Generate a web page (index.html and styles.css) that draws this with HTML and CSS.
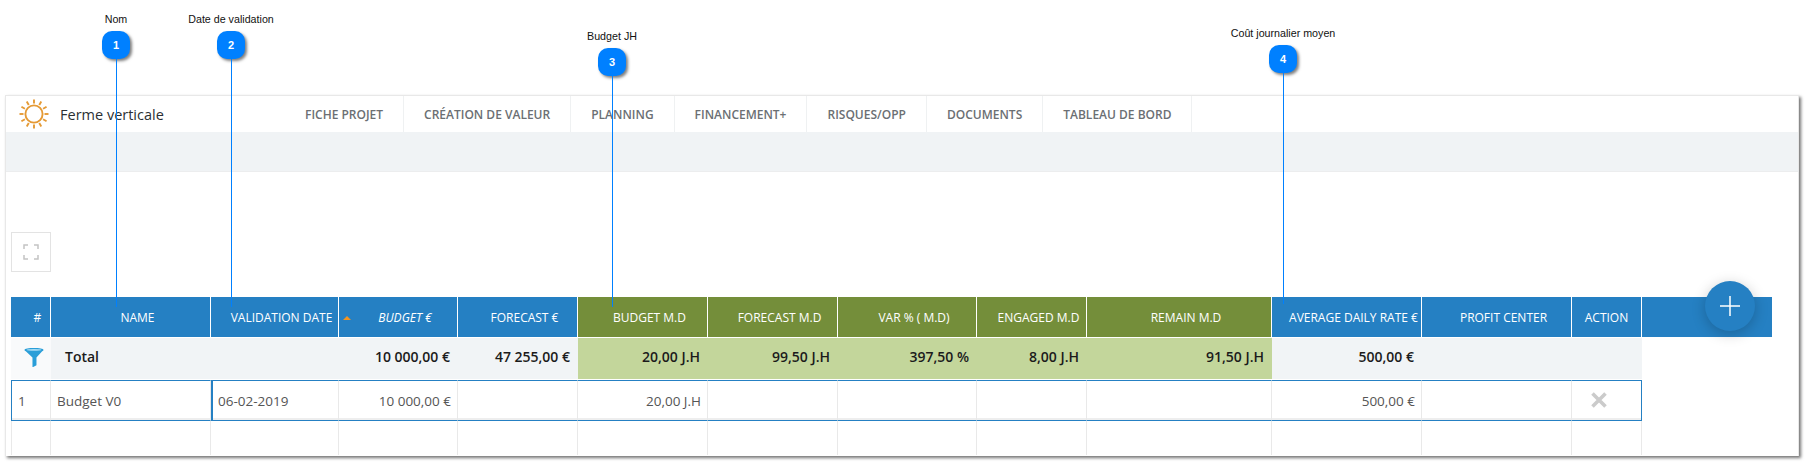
FILE: index.html
```html
<!DOCTYPE html>
<html lang="fr">
<head>
    <meta charset="UTF-8">
    <title>Ferme verticale - Budget</title>
    <link rel="stylesheet" href="styles.css">
</head>
<body>
<div class="callout callout-1">
    <span class="callout-label">Nom</span>
    <span class="callout-badge">1</span>
    <span class="callout-line"></span>
</div>
<div class="callout callout-2">
    <span class="callout-label">Date de validation</span>
    <span class="callout-badge">2</span>
    <span class="callout-line"></span>
</div>
<div class="callout callout-3">
    <span class="callout-label">Budget JH</span>
    <span class="callout-badge">3</span>
    <span class="callout-line"></span>
</div>
<div class="callout callout-4">
    <span class="callout-label">Coût journalier moyen</span>
    <span class="callout-badge">4</span>
    <span class="callout-line"></span>
</div>

<div class="frame">
    <header class="topbar">
        <div class="brand">
            <svg class="sun" viewBox="0 0 30 30" fill="none" stroke="#e59a35" stroke-width="1.9">
                <circle cx="15" cy="15" r="8.6"/>
                <line x1="15" y1="0.5" x2="15" y2="4.5"/>
                <line x1="15" y1="0.5" x2="15" y2="4.5" transform="rotate(30 15 15)"/>
                <line x1="15" y1="0.5" x2="15" y2="4.5" transform="rotate(60 15 15)"/>
                <line x1="15" y1="0.5" x2="15" y2="4.5" transform="rotate(90 15 15)"/>
                <line x1="15" y1="0.5" x2="15" y2="4.5" transform="rotate(120 15 15)"/>
                <line x1="15" y1="0.5" x2="15" y2="4.5" transform="rotate(150 15 15)"/>
                <line x1="15" y1="0.5" x2="15" y2="4.5" transform="rotate(180 15 15)"/>
                <line x1="15" y1="0.5" x2="15" y2="4.5" transform="rotate(210 15 15)"/>
                <line x1="15" y1="0.5" x2="15" y2="4.5" transform="rotate(240 15 15)"/>
                <line x1="15" y1="0.5" x2="15" y2="4.5" transform="rotate(270 15 15)"/>
                <line x1="15" y1="0.5" x2="15" y2="4.5" transform="rotate(300 15 15)"/>
                <line x1="15" y1="0.5" x2="15" y2="4.5" transform="rotate(330 15 15)"/>
            </svg>
            <span class="brand-name">Ferme verticale</span>
        </div>
        <nav class="tabs">
            <a class="tab tab-fiche">FICHE PROJET</a>
            <a class="tab">CRÉATION DE VALEUR</a>
            <a class="tab">PLANNING</a>
            <a class="tab">FINANCEMENT+</a>
            <a class="tab">RISQUES/OPP</a>
            <a class="tab">DOCUMENTS</a>
            <a class="tab">TABLEAU DE BORD</a>
        </nav>
    </header>
    <div class="band"></div>

    <div class="content">
        <button class="fullscreen">
            <svg width="16" height="16" viewBox="0 0 16 16" fill="none" stroke="#c4c4c4" stroke-width="1.5">
                <path d="M1 5V1h4M11 1h4v4M15 11v4h-4M5 15H1v-4"/>
            </svg>
        </button>

        <table class="grid">
            <colgroup>
                <col class="c-num"><col class="c-name"><col class="c-date"><col class="c-budget"><col class="c-forecast">
                <col class="c-bmd"><col class="c-fmd"><col class="c-var"><col class="c-emd"><col class="c-rmd">
                <col class="c-adr"><col class="c-profit"><col class="c-action"><col class="c-rest">
            </colgroup>
            <thead>
                <tr>
                    <th>#</th>
                    <th>NAME</th>
                    <th>VALIDATION DATE</th>
                    <th class="sorted"><i class="sort-arrow"></i><em>BUDGET €</em></th>
                    <th>FORECAST €</th>
                    <th class="green">BUDGET M.D</th>
                    <th class="green">FORECAST M.D</th>
                    <th class="green">VAR % ( M.D)</th>
                    <th class="green">ENGAGED M.D</th>
                    <th class="green">REMAIN M.D</th>
                    <th>AVERAGE DAILY RATE €</th>
                    <th>PROFIT CENTER</th>
                    <th class="th-action">ACTION</th>
                    <th></th>
                </tr>
            </thead>
            <tbody>
                <tr class="total">
                    <td class="filter-cell">
                        <svg class="funnel" viewBox="0 0 20 20">
                            <path d="M0 2C0 .6 4.5 0 10 0s10 .6 10 2c0 .5-.6 1-1.400 1.300L12.600 10v8.200L9.200 20h-.8v-10L1.400 3.300C.6 3 0 2.500 0 2z" fill="#2a9ed8"/>
                            <ellipse cx="10" cy="2" rx="7.800" ry="1" fill="#a9dcf3"/>
                        </svg>
                    </td>
                    <td class="total-name">Total</td>
                    <td></td>
                    <td class="num">10 000,00 €</td>
                    <td class="num">47 255,00 €</td>
                    <td class="num light">20,00 J.H</td>
                    <td class="num light">99,50 J.H</td>
                    <td class="num light">397,50 %</td>
                    <td class="num light">8,00 J.H</td>
                    <td class="num light">91,50 J.H</td>
                    <td class="num">500,00 €</td>
                    <td></td>
                    <td></td>
                    <td class="blank"></td>
                </tr>
                <tr class="selected">
                    <td class="first">1</td>
                    <td>Budget V0</td>
                    <td class="active">06-02-2019</td>
                    <td class="num">10 000,00 €</td>
                    <td></td>
                    <td class="num">20,00 J.H</td>
                    <td></td>
                    <td></td>
                    <td></td>
                    <td></td>
                    <td class="num">500,00 €</td>
                    <td></td>
                    <td class="remove">
                        <svg width="16" height="16" viewBox="0 0 16 16" stroke="#cbcbcb" stroke-width="3.600">
                            <path d="M1.500 1.500l13 13M14.500 1.500l-13 13"/>
                        </svg>
                    </td>
                    <td class="blank"></td>
                </tr>
                <tr class="empty">
                    <td></td><td></td><td></td><td></td><td></td><td></td><td></td>
                    <td></td><td></td><td></td><td></td><td></td><td></td><td class="blank"></td>
                </tr>
            </tbody>
        </table>

        <button class="fab">
            <svg width="20" height="20" viewBox="0 0 20 20" stroke="#fff" stroke-width="1.500">
                <path d="M10 0v20M0 10h20"/>
            </svg>
        </button>
    </div>
</div>
</body>
</html>
```

FILE: styles.css
```css
/* Global */
body {
    margin: 0;
    height: 465px;
    overflow: hidden;
    background: #fff;
    font-family: 'Open Sans', sans-serif;
    position: relative;
}

/* Callouts drawn over the screenshot */
.callout {
    position: absolute;
    z-index: 5;
    width: 160px;
    display: flex;
    flex-direction: column;
    align-items: center;
}

.callout-1 { left: 36px; top: 12px; }
.callout-2 { left: 151px; top: 12px; }
.callout-3 { left: 532px; top: 29px; }
.callout-4 { left: 1203px; top: 26px; }

.callout-label {
    font-family: 'Liberation Sans', sans-serif;
    font-size: 10.7px;
    line-height: 14px;
    height: 19px;
    color: #111;
    white-space: nowrap;
}

.callout-badge {
    width: 28px;
    height: 28px;
    border-radius: 10px;
    background: #0080ff;
    color: #fff;
    font-family: 'Liberation Sans', sans-serif;
    font-size: 11px;
    font-weight: bold;
    display: flex;
    align-items: center;
    justify-content: center;
    box-shadow: 2px 2px 3px rgba(0, 0, 0, 0.5);
}

.callout-line {
    width: 1px;
    background: #0080ff;
}

.callout-1 .callout-line, .callout-2 .callout-line { height: 248px; }
.callout-3 .callout-line { height: 231px; }
.callout-4 .callout-line { height: 231px; }

/* Application frame */
.frame {
    position: absolute;
    left: 5px;
    top: 95px;
    width: 1794px;
    height: 361px;
    box-sizing: border-box;
    border: 1px solid #e8e8e8;
    border-bottom: 0;
    background: #fff;
    box-shadow: 2px 2px 3px rgba(0, 0, 0, 0.55);
}

.topbar {
    height: 36px;
    display: flex;
    align-items: stretch;
}

.brand {
    width: 279px;
    display: flex;
    align-items: center;
    padding-left: 13px;
    box-sizing: border-box;
}

.sun {
    width: 30px;
    height: 30px;
    margin-right: 11px;
}

.brand-name {
    font-size: 14.5px;
    color: #2b2f33;
}

.tabs {
    display: flex;
}

.tab {
    display: flex;
    align-items: center;
    padding: 0 20px;
    font-size: 12px;
    font-weight: 600;
    color: #6b6f73;
    border-right: 1px solid #eff1f2;
}

.band {
    height: 40px;
    background: #f0f3f5;
    border-bottom: 1px solid #ecedee;
    box-sizing: border-box;
}

.content {
    position: relative;
    padding: 60px 0 0 5px;
}

.fullscreen {
    display: flex;
    align-items: center;
    justify-content: center;
    width: 40px;
    height: 40px;
    padding: 0;
    margin-bottom: 25px;
    background: #fff;
    border: 1px solid #e3e3e3;
}

/* Table */
.grid {
    table-layout: fixed;
    width: 1761px;
    border-collapse: separate;
    border-spacing: 0;
    font-size: 13.5px;
}

.c-num { width: 40px; }
.c-name { width: 160px; }
.c-date { width: 128px; }
.c-budget { width: 119px; }
.c-forecast { width: 120px; }
.c-bmd { width: 130px; }
.c-fmd { width: 130px; }
.c-var { width: 139px; }
.c-emd { width: 110px; }
.c-rmd { width: 185px; }
.c-adr { width: 150px; }
.c-profit { width: 150px; }
.c-action { width: 70px; }
.c-rest { width: 130px; }

th {
    height: 41px;
    padding: 0 0 0 14px;
    box-sizing: border-box;
    background: #2580c3;
    color: #fff;
    font-size: 12px;
    font-weight: 400;
    text-align: center;
    white-space: nowrap;
    border-right: 1px solid #fff;
    border-bottom: 1px solid #fff;
    position: relative;
}

th.green {
    background: #748e3a;
}

th.th-action {
    padding-left: 0;
}

th:last-child {
    border-right: 0;
}

.sort-arrow {
    position: absolute;
    left: 4px;
    top: 19px;
    border-left: 4px solid transparent;
    border-right: 4px solid transparent;
    border-bottom: 4px solid #f2931f;
}

td {
    padding: 0 6px;
    color: #555;
    white-space: nowrap;
    box-sizing: border-box;
    border-right: 1px solid #e9e9e9;
}

.num {
    text-align: right;
}

.total td {
    height: 42px;
    padding: 0 8px 4px 6px;
    background: #f1f4f6;
    color: #1b1b1b;
    font-size: 14px;
    font-weight: 600;
    border-right: 0;
    border-bottom: 1px solid #fff;
}

.total .light {
    background: #c3d69b;
}

.total .filter-cell {
    background: #f9fafb;
    text-align: center;
    padding: 0 0 3px;
}

.total .total-name {
    padding-left: 14px;
}

.total .blank, .selected .blank, .empty .blank {
    background: none;
    border: 0;
    box-shadow: none;
}

.funnel {
    display: block;
    width: 20px;
    height: 19px;
    margin: 0 auto 0 13px;
}

.selected td {
    height: 41px;
    border-top: 1px solid #2580c3;
    border-bottom: 1px solid #2580c3;
    box-shadow: inset 0 -2px 0 #eeeeee;
}

.selected .first {
    border-left: 1px solid #2580c3;
    padding-left: 6px;
}

.selected .active {
    border-left: 2px solid #2580c3;
    padding-left: 5px;
}

.selected .remove {
    border-right: 1px solid #2580c3;
    text-align: center;
    padding: 3px 16px 0 0;
}

.empty td {
    height: 34px;
}

.empty td:first-child {
    border-left: 1px solid #e9e9e9;
}

/* Floating button */
.fab {
    position: absolute;
    right: 43px;
    top: 109px;
    width: 50px;
    height: 50px;
    padding: 0;
    border: 0;
    border-radius: 50%;
    background: #2580c3;
    display: flex;
    align-items: center;
    justify-content: center;
    box-shadow: 0 3px 14px rgba(0, 0, 0, 0.22);
}
```
